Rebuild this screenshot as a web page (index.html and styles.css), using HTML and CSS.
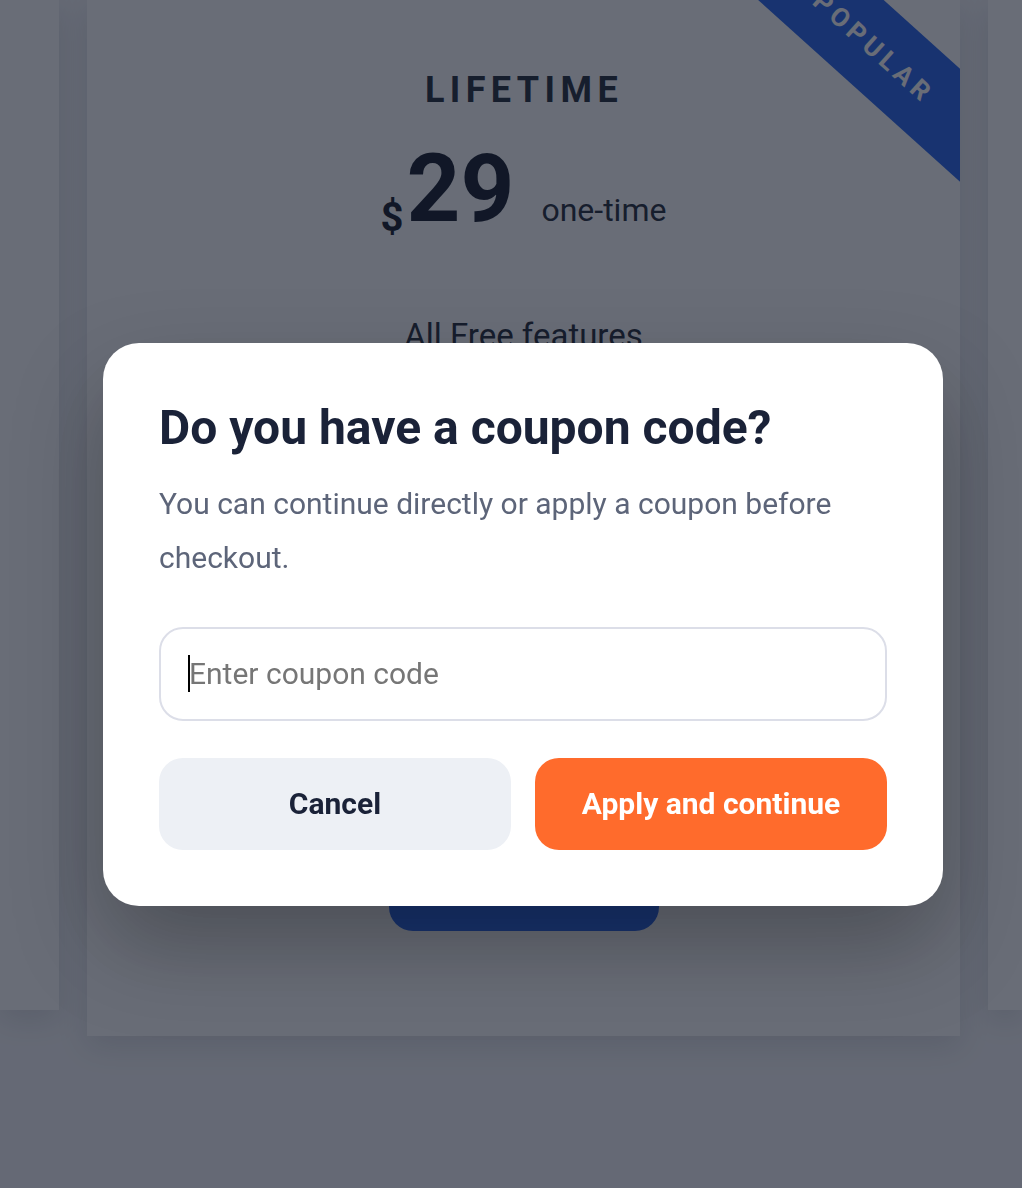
FILE: index.html
```html
<!DOCTYPE html>
<html lang="en">
<head>
<meta charset="utf-8">
<title>Pricing – coupon</title>
<link rel="stylesheet" href="styles.css">
</head>
<body>
<main class="pricing">
  <div class="card side"></div>
  <section class="card featured">
    <div class="ribbon">POPULAR</div>
    <h2 class="plan">LIFETIME</h2>
    <div class="price">
      <span class="cur">$</span><span class="amt">29</span><span class="per">one-time</span>
    </div>
    <ul class="features">
      <li>All Free features</li>
      <li>Unlimited projects</li>
      <li>Priority support</li>
      <li>Lifetime updates</li>
      <li>Export to all formats</li>
    </ul>
    <button class="buy" type="button">Get Lifetime</button>
  </section>
  <div class="card side"></div>
</main>

<div class="backdrop">
  <div class="modal" role="dialog" aria-labelledby="coupon-title">
    <h1 id="coupon-title" class="modal-title">Do you have a coupon code?</h1>
    <p class="modal-text">You can continue directly or apply a coupon before checkout.</p>
    <div class="field">
      <input class="coupon-input" type="text" placeholder="Enter coupon code" autofocus>
      <span class="caret" aria-hidden="true"></span>
    </div>
    <div class="actions">
      <button class="btn btn-cancel" type="button">Cancel</button>
      <button class="btn btn-apply" type="button">Apply and continue</button>
    </div>
  </div>
</div>
</body>
</html>
```

FILE: styles.css
```css
* { box-sizing: border-box; }

html, body {
  margin: 0;
  height: 100%;
  overflow: hidden;
}

body {
  background: #f4f5f8;
  font-family: Roboto, "Liberation Sans", Arial, sans-serif;
  color: #111827;
}

.pricing {
  display: grid;
  grid-template-columns: 59px 873px 1fr;
  column-gap: 28px;
  align-items: start;
}

.card {
  background: #ffffff;
  box-shadow: 0 10px 30px rgba(15, 23, 42, 0.12);
}

.side {
  height: 1010px;
}

.featured {
  position: relative;
  overflow: hidden;
  height: 1036px;
  display: flex;
  flex-direction: column;
  align-items: center;
  padding-top: 68px;
  padding-bottom: 105px;
}

.ribbon {
  position: absolute;
  left: 605px;
  top: 4px;
  width: 360px;
  height: 84px;
  background: #2563eb;
  color: #ffffff;
  transform: rotate(42deg);
  display: flex;
  align-items: center;
  justify-content: center;
  font-weight: 700;
  font-size: 26px;
  letter-spacing: 5px;
  padding-left: 5px;
}

.plan {
  margin: 0;
  font-size: 36px;
  font-weight: 700;
  letter-spacing: 5.4px;
  padding-left: 1px;
  color: #1f2937;
  line-height: 44px;
}

.price {
  display: flex;
  align-items: baseline;
  margin-top: 30px;
  color: #111827;
}

.cur {
  font-size: 40px;
  font-weight: 700;
  position: relative;
  top: 10px;
}

.amt {
  font-size: 94px;
  font-weight: 700;
  line-height: 1;
  margin-left: 3px;
}

.per {
  font-size: 32px;
  color: #1f2937;
  margin-left: 27px;
}

.features {
  list-style: none;
  margin: 70px 0 0;
  padding: 0;
  text-align: center;
  font-size: 33px;
  line-height: 60px;
  color: #1f2937;
}

.buy {
  margin-top: auto;
  width: 270px;
  height: 80px;
  border: 0;
  border-radius: 24px;
  background: #2563eb;
  color: #ffffff;
  font: 700 26px Roboto, sans-serif;
}

.backdrop {
  position: fixed;
  inset: 0;
  background: rgba(17, 24, 39, 0.63);
  display: flex;
  align-items: flex-start;
  justify-content: flex-start;
  padding: 343px 0 0 103px;
}

.modal {
  width: 840px;
  background: #ffffff;
  border-radius: 36px;
  padding: 56px;
  box-shadow: 0 40px 90px rgba(0, 0, 0, 0.28);
}

.modal-title {
  margin: 0;
  font-size: 48px;
  font-weight: 700;
  line-height: 1.2;
  color: #1a2238;
}

.modal-text {
  margin: 20px 0 0;
  font-size: 30px;
  line-height: 54px;
  color: #5d6579;
}

.field {
  position: relative;
  margin-top: 42px;
}

.coupon-input {
  display: block;
  width: 100%;
  height: 94px;
  padding: 0 28px;
  border: 2px solid #dcdee8;
  border-radius: 24px;
  font: 400 30px Roboto, sans-serif;
  color: #1a2238;
  outline: none;
  caret-color: transparent;
}

.coupon-input::placeholder {
  color: #767676;
}

.caret {
  position: absolute;
  left: 29px;
  top: 28px;
  width: 2px;
  height: 37px;
  background: #000000;
}

.actions {
  display: grid;
  grid-template-columns: 1fr 1fr;
  gap: 24px;
  margin-top: 37px;
}

.btn {
  height: 92px;
  border: 0;
  border-radius: 24px;
  font: 700 30px Roboto, sans-serif;
}

.btn-cancel {
  background: #edf0f5;
  color: #1a2238;
}

.btn-apply {
  background: #ff6b2c;
  color: #ffffff;
}
```
